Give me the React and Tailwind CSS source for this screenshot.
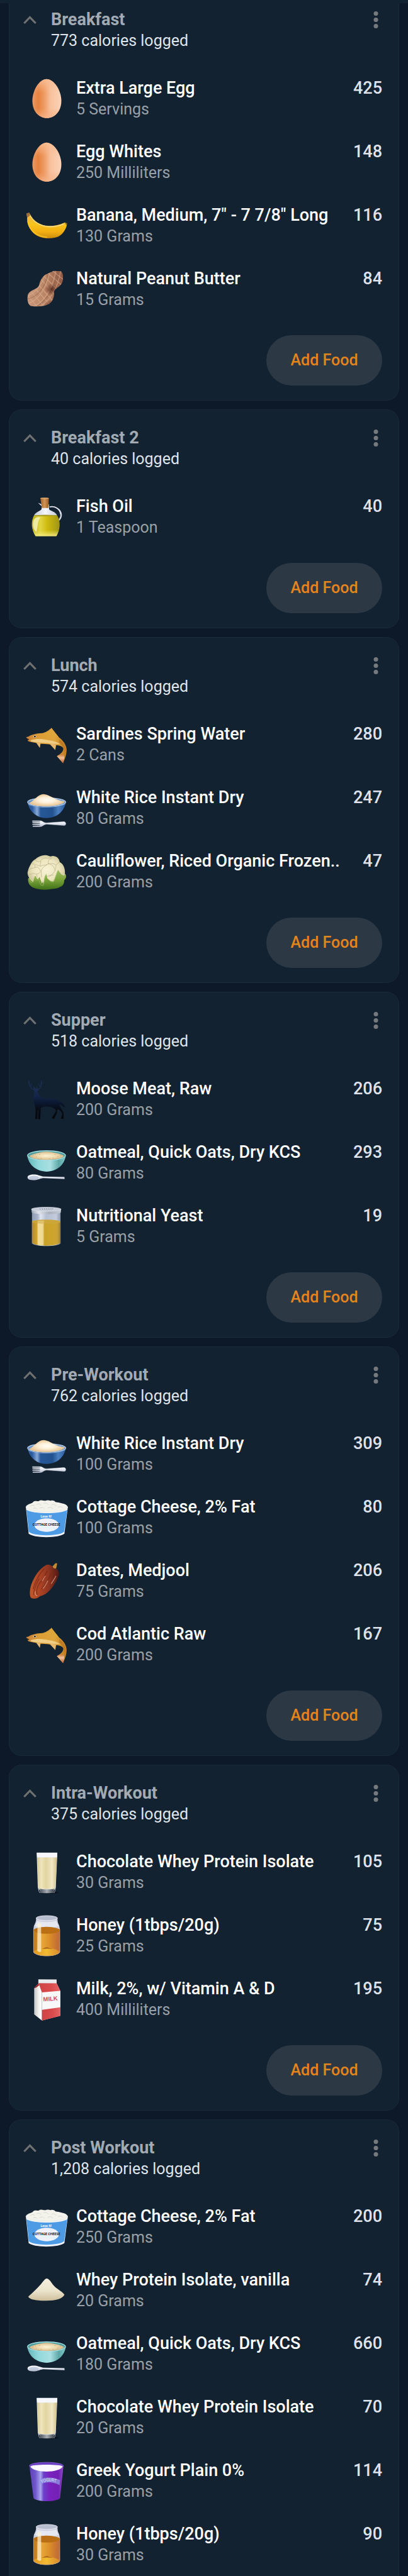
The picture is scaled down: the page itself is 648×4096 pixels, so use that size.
import React from "react";

function Gradient({ id, stops, vertical, radial }) {
  const children = stops.map(([offset, color, opacity = 1]) => (
    <stop key={offset} offset={offset} stopColor={color} stopOpacity={opacity} />
  ));
  if (radial) return <radialGradient id={id}>{children}</radialGradient>;
  return (
    <linearGradient id={id} x1="0" y1="0" x2={vertical ? 0 : 1} y2={vertical ? 1 : 0}>
      {children}
    </linearGradient>
  );
}

function SharedGradients() {
  return (
    <svg className="block h-0 w-0" aria-hidden="true">
      <defs>
        <Gradient id="egg" stops={[[0, "#e99a66"], [0.2, "#e6823f"], [0.4, "#ee9a62"], [0.62, "#f8c19c"], [1, "#fbd3b8"]]} />
        <Gradient id="eggTop" vertical stops={[[0, "#f9be95", 0.9], [0.35, "#f9be95", 0], [0.75, "#f3a878", 0], [1, "#f6b68c", 0.8]]} />
        <Gradient id="banana" vertical stops={[[0, "#e8b64e"], [0.45, "#f7c31c"], [0.75, "#f2ae12"], [1, "#c98a10"]]} />
        <Gradient id="peanut" stops={[[0, "#c9977a"], [0.55, "#b98264"], [1, "#8d5842"]]} />
        <Gradient id="shade" radial stops={[[0, "#43180e", 0.7], [1, "#43180e", 0]]} />
        <Gradient id="cork" stops={[[0, "#9c5f2c"], [0.5, "#d09455"], [1, "#9a5c2a"]]} />
        <Gradient id="oil" stops={[[0, "#b9ac1d"], [0.3, "#e2d543"], [0.55, "#cfbb0f"], [1, "#9d9418"]]} />
        <Gradient id="oilGlow" vertical stops={[[0, "#f5efa0", 0], [0.7, "#f0e660", 0], [1, "#f5ee8a", 0.9]]} />
        <Gradient id="glassNeck" stops={[[0, "#c5cbd9"], [0.5, "#f4f6fb"], [1, "#c3c9d6"]]} />
        <Gradient id="fish" stops={[[0, "#c9823a"], [0.35, "#dc9e35"], [0.7, "#dda63c"], [1, "#c07a22"]]} />
        <Gradient id="tail" vertical stops={[[0, "#c9752f"], [0.4, "#f0c19a"], [1, "#b9572b"]]} />
        <Gradient id="blueBowl" stops={[[0, "#2f62a4"], [0.12, "#2a5a9e"], [0.25, "#87a9d8"], [0.34, "#265798"], [0.65, "#23528f"], [0.8, "#4b7fc0"], [1, "#2a5a9e"]]} />
        <Gradient id="rice" radial stops={[[0, "#fffdf6"], [0.45, "#fdf0d8"], [1, "#e8c592"]]} />
        <Gradient id="silver" vertical stops={[[0, "#ffffff"], [0.5, "#e4e7f1"], [1, "#a9b1c2"]]} />
        <Gradient id="leaf" vertical stops={[[0, "#a4bd6c"], [0.5, "#7ba63a"], [1, "#3f7018"]]} />
        <Gradient id="curd" radial stops={[[0, "#f8f2d5"], [0.7, "#ede5be"], [1, "#d2caa0"]]} />
        <Gradient id="deer" vertical stops={[[0, "#1d3059"], [0.28, "#15254a"], [0.5, "#0c1830"], [0.7, "#070d16"], [1, "#05080c"]]} />
        <Gradient id="tealBowl" stops={[[0, "#62b5b8"], [0.3, "#92d8dc"], [0.6, "#a9dfe2"], [0.82, "#5ea8a8"], [1, "#7fc6c8"]]} />
        <Gradient id="oats" radial stops={[[0, "#fbf2d6"], [0.5, "#eedbb0"], [1, "#d9b98a"]]} />
        <Gradient id="yeast" stops={[[0, "#b08c2c"], [0.18, "#d3a52f"], [0.22, "#ecd27f"], [0.37, "#e6cb78"], [0.42, "#c9a227"], [0.8, "#cda52e"], [0.9, "#c7a03a"], [1, "#9b7d2c"]]} />
        <Gradient id="jarGlass" stops={[[0, "#8f9cb3"], [0.2, "#a9b4c9"], [0.3, "#dfe5f1"], [0.5, "#b5bfd3"], [0.85, "#c3cbdc"], [1, "#8e99b0"]]} />
        <Gradient id="lid" stops={[[0, "#9ea7b5"], [0.25, "#dfe3ea"], [0.6, "#a9b0bc"], [1, "#c6ccd6"]]} />
        <Gradient id="date" stops={[[0, "#c05a2c"], [0.35, "#ab4324"], [0.65, "#8d3420"], [1, "#541a14"]]} />
        <Gradient id="shake" stops={[[0, "#d8cb97"], [0.2, "#efe5bd"], [0.45, "#e2d5a1"], [0.75, "#f0e7c4"], [1, "#cfc08b"]]} />
        <Gradient id="glassBase" stops={[[0, "#cfd3d6"], [0.15, "#59626b"], [0.5, "#a8adb3"], [0.85, "#4c555e"], [1, "#c7cbd0"]]} />
        <Gradient id="honey" stops={[[0, "#b9771f"], [0.14, "#d08a22"], [0.3, "#e9a63b"], [0.6, "#dc8f28"], [0.85, "#c97433"], [1, "#bb6a3c"]]} />
        <Gradient id="honeyBase" stops={[[0, "#e0971f"], [0.5, "#f2bb34"], [1, "#d9892b"]]} />
        <Gradient id="carton" stops={[[0, "#c4c5c4"], [0.6, "#f4f4f2"], [1, "#ffffff"]]} />
        <Gradient id="cartonRed" stops={[[0, "#cf4446"], [0.55, "#d94a4c"], [1, "#e56364"]]} />
        <Gradient id="pile" vertical stops={[[0, "#f6efdf"], [0.55, "#ece4cd"], [1, "#cdbf9b"]]} />
        <Gradient id="yogurt" stops={[[0, "#5b3fb5"], [0.18, "#7056cc"], [0.33, "#a9a4ef"], [0.42, "#6b40c9"], [0.6, "#7a22c0"], [0.85, "#7420b4"], [1, "#8d4fc7"]]} />
      </defs>
    </svg>
  );
}

function Egg() {
  const d = "M186 93C238 93 293 172 293 250C293 330 242 375 188 375C132 375 84 328 84 250C84 172 136 93 186 93Z";
  return (
    <>
      <path d={d} fill="url(#egg)" />
      <path d={d} fill="url(#eggTop)" />
    </>
  );
}

function Banana() {
  return (
    <g transform="scale(1 1.186)">
      <path d="M42 900L62 895L68 908C90 948 140 972 205 975C250 976 290 966 318 954L334 960C332 985 312 1018 280 1036C245 1054 170 1058 120 1036C75 1012 44 975 46 925Z" fill="url(#banana)" />
      <path d="M64 905C88 948 140 978 205 980C250 980 285 972 312 962" fill="none" stroke="#f5d77d" strokeWidth="7" />
      <path d="M50 945C62 1005 120 1042 190 1044" fill="none" stroke="#ffcf24" strokeWidth="9" opacity=".6" />
      <path d="M42 900L62 895L68 910L47 925Z" fill="#a0703a" />
      <path d="M318 954L334 960L332 972L324 964Z" fill="#8a6a20" />
    </g>
  );
}

function Peanut() {
  const d = "M238 1250L290 1252C306 1262 310 1292 300 1318C288 1350 248 1352 240 1375C244 1400 236 1430 208 1448C180 1466 110 1470 72 1464C46 1452 44 1410 54 1390C72 1364 118 1364 132 1338C140 1306 158 1284 180 1272Z";
  return (
    <g transform="scale(1 1.186)">
      <clipPath id="peanutShell"><path d={d} /></clipPath>
      <path d={d} fill="url(#peanut)" />
      <g clipPath="url(#peanutShell)">
        <path d="M50 1400L130 1480M75 1375L175 1475M105 1358L215 1460M128 1335L240 1440M145 1300L250 1400M165 1280L270 1370M195 1262L300 1340M230 1250L310 1305M40 1450C110 1440 180 1380 215 1240M50 1400C100 1390 160 1330 180 1260M70 1475C160 1450 230 1370 255 1240M110 1480C200 1450 270 1360 290 1240M165 1480C220 1450 300 1370 320 1260" fill="none" stroke="#d9ae90" strokeWidth="5" opacity=".7" />
        <path d="M52 1420C120 1410 180 1350 200 1255M90 1478C170 1450 240 1370 270 1250" fill="none" stroke="#865640" strokeWidth="5" opacity=".45" />
        <ellipse cx="222" cy="1362" rx="50" ry="36" fill="url(#shade)" />
        <ellipse cx="222" cy="1455" rx="56" ry="28" fill="url(#shade)" />
      </g>
    </g>
  );
}

function OilBottle() {
  return (
    <g transform="scale(1.877 1.339)">
      <path d="M191 583C212 576 232 594 235 622C236 640 230 650 223 658" fill="none" stroke="#cfd4e0" strokeWidth="6" />
      <path d="M193 581C214 576 230 594 232 622" fill="none" stroke="#fafbff" strokeWidth="2" />
      <path d="M146 560L160 568L188 568L189 596C196 606 212 606 220 628L131 628C136 610 155 606 160 594L160 578Z" fill="url(#glassNeck)" />
      <path d="M131 628L220 628C234 660 232 705 217 740L137 740C120 705 118 660 131 628Z" fill="url(#oil)" />
      <path d="M131 628L220 628C234 660 232 705 217 740L137 740C120 705 118 660 131 628Z" fill="url(#oilGlow)" />
      <path d="M130 650C140 636 150 636 155 640C143 660 146 690 140 718C124 700 125 670 130 650Z" fill="#f6f2c0" opacity=".8" />
      <ellipse cx="175" cy="629" rx="44" ry="4" fill="#a89b25" />
      <path d="M155 534L188 534L186 588L161 588Z" fill="url(#cork)" />
      <ellipse cx="171.500" cy="536" rx="16.500" ry="4" fill="#d8a56d" />
    </g>
  );
}

function Fish() {
  return (
    <>
      <path d="M24 126L40 122C60 108 100 98 140 97C165 92 190 76 207 58C222 78 246 108 262 128C290 150 312 176 316 212C318 250 302 284 290 314C276 296 260 278 246 262C270 250 292 232 292 208C288 192 262 184 240 184L234 218C222 204 208 190 196 178C170 176 148 174 128 174L122 202C114 190 106 178 98 168C78 164 56 162 40 156L34 148L46 142L30 134Z" fill="url(#fish)" />
      <path d="M60 146C100 134 140 138 180 146C220 150 252 162 272 178C246 172 208 178 180 168C140 166 90 166 54 154Z" fill="#f0cd86" />
      <path d="M98 166L122 202L126 168ZM194 172L234 218L238 178Z" fill="#e7b672" />
      <path d="M140 97C160 108 200 100 207 60C222 82 246 108 260 128C230 116 180 110 140 97Z" fill="#dca63a" />
      <path d="M262 140C300 165 312 215 296 240C304 205 284 180 262 164Z" fill="#b26d1f" opacity=".6" />
      <path d="M246 262L276 248C300 246 306 270 290 314Z" fill="url(#tail)" />
      <path d="M30 134L46 141L34 148Z" fill="#4b2513" />
      <circle cx="87" cy="121" r="9" fill="#f4ead8" />
      <circle cx="87" cy="121" r="6" fill="#1c1a18" />
    </>
  );
}

function RiceBowl() {
  return (
    <>
      <path d="M34 596C44 650 86 710 172 711C258 710 302 650 311 594C290 640 60 642 34 596Z" fill="url(#blueBowl)" />
      <ellipse cx="172" cy="596" rx="138" ry="31" fill="#6f97ca" stroke="#bcd0ea" strokeWidth="5" />
      <path d="M46 602C80 590 104 540 150 538C200 542 220 580 300 590C306 606 240 626 172 625C110 625 60 618 46 602Z" fill="url(#rice)" />
      <path d="M40 612C90 640 250 640 306 608" fill="none" stroke="#8fb0da" strokeWidth="4" />
      <path d="M69 730L122 730C140 728 148 746 172 746L296 737C314 738 314 763 300 765L172 755C150 756 145 774 122 773L72 773L72 768L124 766L124 760L70 758L70 753L124 752L124 746L70 744L70 739L124 738L124 734L69 734Z" fill="url(#silver)" stroke="#dfe3ee" strokeWidth="2" />
    </>
  );
}

function Cauliflower() {
  return (
    <>
      <path d="M38 1150C36 1185 50 1206 82 1218C120 1232 160 1232 190 1228C222 1222 250 1224 268 1210C290 1204 300 1184 298 1162C312 1148 318 1128 306 1116L250 1080L70 1120Z" fill="url(#leaf)" />
      <path d="M40 1082C54 1050 66 1022 90 1010C110 990 136 980 160 980C184 978 196 996 212 986C240 984 262 1000 266 1030C292 1042 306 1076 304 1110C306 1136 288 1130 272 1112L254 1088C240 1110 234 1146 220 1170C204 1172 190 1160 176 1148L170 1118C156 1126 150 1170 152 1190L144 1172L138 1188C130 1168 126 1150 120 1138C112 1150 106 1158 100 1150L92 1130C84 1136 80 1150 74 1176C56 1160 34 1136 34 1106Z" fill="url(#curd)" />
      <path d="M90 1012C100 1030 116 1030 130 1022C140 1002 160 996 180 1004C200 994 214 1002 210 988M58 1042C76 1034 92 1050 88 1070C70 1076 52 1072 44 1088M88 1070C104 1060 124 1076 128 1098C116 1118 96 1122 80 1112C66 1110 56 1124 40 1116M128 1060C140 1050 176 1054 184 1042C206 1046 228 1060 232 1092C222 1116 198 1130 186 1128M132 1098C136 1074 150 1064 184 1042M184 1042C180 1020 190 1006 210 1004M240 1052C250 1036 262 1036 266 1030M232 1092C238 1074 240 1064 240 1052C226 1040 206 1040 184 1042M130 1022C128 1040 122 1052 128 1060C112 1056 96 1050 88 1046M176 1130C190 1140 210 1120 222 1124M100 1120L104 1140M132 1098L134 1140" fill="none" stroke="#b7ad82" strokeWidth="3" />
      <path d="M50 1150C46 1190 80 1190 84 1134C96 1170 104 1166 112 1150L130 1196L146 1200L168 1116C174 1150 200 1180 222 1172C238 1150 240 1110 256 1088L280 1120" fill="none" stroke="#b6cc85" strokeWidth="4" opacity=".6" />
    </>
  );
}

function Deer() {
  return (
    <>
      <path d="M44 28C42 62 54 86 84 92M48 50L40 40M56 68L62 50M134 26C138 62 130 84 106 92M130 50L140 42M124 68L114 50" fill="none" stroke="#1c3059" strokeWidth="5" strokeLinecap="round" />
      <path d="M78 88L70 84L80 98L84 124C74 140 72 160 82 186L88 214L92 240L90 302L104 306L108 240L112 240L110 304L126 306L130 224C150 212 180 212 208 218C232 226 240 236 238 248L208 298L226 302L246 262L250 232C266 238 280 250 284 268L276 302L294 304L294 258C284 232 266 222 266 196C276 202 290 216 306 222C302 196 270 168 232 160C190 152 150 160 124 140L106 112L108 100L120 88L106 88L102 66L98 84L90 84L78 66Z" fill="url(#deer)" />
    </>
  );
}

function OatmealBowl() {
  return (
    <>
      <path d="M32 572C44 640 100 684 172 685C244 684 298 640 310 572C280 612 64 612 32 572Z" fill="url(#tealBowl)" />
      <ellipse cx="171" cy="568" rx="137" ry="34" fill="#4f9ea0" stroke="#a5dfe2" strokeWidth="6" />
      <path d="M46 572C80 556 120 544 172 541C220 544 270 554 298 572C280 592 230 600 172 600C110 600 64 592 46 572Z" fill="url(#oats)" />
      <path d="M70 570h6M95 580h6M118 560h6M90 562h4M130 588h6M230 560h6M250 578h6M215 586h6M270 568h6M190 592h6M110 590h4M240 590h5" stroke="#c79e6b" strokeWidth="4" />
      <path d="M34 728C32 710 60 704 88 706C112 708 120 716 146 720L300 724L302 739L146 732C120 736 104 748 76 747C52 746 36 742 34 728Z" fill="url(#silver)" />
      <ellipse cx="80" cy="728" rx="36" ry="13" fill="#b9c4d8" opacity=".8" />
    </>
  );
}

function YeastJar() {
  return (
    <>
      <path d="M66 980L66 1204C90 1230 250 1230 272 1204L272 980Z" fill="url(#jarGlass)" />
      <path d="M66 1050L66 1200C90 1228 250 1228 272 1200L272 1050Z" fill="url(#yeast)" />
      <ellipse cx="169" cy="1048" rx="103" ry="15" fill="#cda63a" />
      <path d="M106 1040H152V1216C136 1215 118 1213 106 1210Z" fill="#fff4c8" opacity=".35" />
      <path d="M62 958L64 982C90 998 250 998 274 982L276 958Z" fill="url(#lid)" />
      <ellipse cx="169" cy="958" rx="107" ry="15" fill="#c6ccd8" stroke="#e1e6ee" strokeWidth="3" />
      <path d="M122 952l6 8M138 950l6 12M154 950l6 12M170 950l5 12M186 950l4 12M202 950l2 12M216 950l-1 8" stroke="#7d8796" strokeWidth="4" />
    </>
  );
}

function CottageCheese() {
  return (
    <>
      <path d="M22 106L42 296C70 332 270 332 300 296L325 106Z" fill="#f0f3fb" />
      <path d="M26 126L43 284C74 318 268 318 298 284L321 126C280 158 70 158 26 126Z" fill="#4d9be4" />
      <ellipse cx="173" cy="106" rx="152" ry="40" fill="#eef0ea" />
      <path d="M30 104C36 86 60 82 72 72C82 56 100 66 116 62C134 50 150 62 164 60C180 50 196 64 208 58C230 56 236 72 244 78C262 70 276 84 292 84C308 82 318 96 318 106C300 140 50 144 30 104Z" fill="#f3f3ec" />
      <path d="M52 100C66 88 80 92 86 100M100 88C112 76 128 84 130 94M150 80C160 72 180 78 184 90M206 92C216 80 236 88 240 100M120 116C134 104 152 110 156 120M180 112C194 102 214 110 216 120M254 108C264 98 284 104 286 112M76 116C84 110 98 112 102 122" fill="none" stroke="#d3d5c9" strokeWidth="4" />
      <ellipse cx="172" cy="236" rx="88" ry="49" fill="#eef1fb" />
      <text x="168" y="182" textAnchor="middle" fontSize="24" fontWeight="700" fill="#ffffff" fontFamily="Roboto, sans-serif">Lose It!</text>
      <text x="170" y="239" textAnchor="middle" fontSize="24" fontWeight="700" fill="#101418" fontFamily="Roboto, sans-serif">COTTAGE CHEESE</text>
    </>
  );
}

function DateFruit() {
  return (
    <>
      <path d="M210 540L236 512L248 514L240 552L222 556Z" fill="#c18a35" />
      <path d="M168 526C196 518 214 532 222 548C248 550 262 566 260 590C252 630 226 672 196 706C176 730 150 744 122 752C104 772 72 772 58 762C46 740 50 700 62 664C82 610 120 552 168 526Z" fill="url(#date)" />
      <path d="M154 552C120 590 90 640 74 700M178 566C150 610 160 620 118 660C100 690 96 716 104 740M200 590C190 630 160 670 134 700M118 622C100 660 80 690 78 740" fill="none" stroke="#6f2315" strokeWidth="6" opacity=".65" />
      <path d="M238 606C228 630 214 644 206 660M162 606C150 616 150 630 140 640M180 640C170 660 160 680 146 694M90 716C86 730 92 742 102 748" fill="none" stroke="#e7b09c" strokeWidth="5" opacity=".75" strokeLinecap="round" />
    </>
  );
}

function ShakeGlass() {
  return (
    <>
      <ellipse cx="200" cy="338" rx="56" ry="8" fill="#060b12" opacity=".6" />
      <path d="M100 50L249 50L238 300L230 338L118 338L108 300Z" fill="#dfe2ea" />
      <path d="M104 84L246 84L236 296L228 312L118 312L110 296Z" fill="url(#shake)" />
      <path d="M101 52L248 52L247 84L103 84Z" fill="#f6f7fc" />
      <path d="M112 308C150 318 200 318 236 308L230 338C200 344 150 344 118 338Z" fill="url(#glassBase)" />
      <path d="M118 318L124 336M230 318L224 336" stroke="#1d2630" strokeWidth="6" />
    </>
  );
}

function HoneyJar() {
  return (
    <>
      <path d="M96 522C96 548 90 560 80 580L76 606L76 770C96 808 248 808 268 770L267 600L262 576C252 560 250 546 250 522Z" fill="#cdd0de" />
      <ellipse cx="173" cy="524" rx="77" ry="18" fill="#b9bdd0" stroke="#edeef6" strokeWidth="4" />
      <path d="M104 544C140 556 206 556 242 544L256 580C250 596 92 596 88 580Z" fill="#eceef5" opacity=".8" />
      <path d="M78 604L78 768C98 806 248 806 266 768L267 604Z" fill="url(#honey)" />
      <path d="M78 764C120 740 150 744 172 736C196 744 230 742 266 766C250 808 96 808 78 764Z" fill="url(#honeyBase)" />
      <path d="M134 748C160 738 170 728 190 740C206 744 212 746 214 748C190 744 160 744 134 748Z" fill="#a9641a" />
      <ellipse cx="172" cy="612" rx="94" ry="25" fill="#bb6f14" />
      <path d="M106 566C114 560 124 562 132 566L132 766C122 772 112 768 104 758Z" fill="#fff2d2" opacity=".72" />
      <path d="M78 604L78 768C98 806 248 806 266 768L267 604" fill="none" stroke="#caa173" strokeWidth="3" />
    </>
  );
}

function MilkCarton() {
  return (
    <>
      <path d="M82 1032L114 994L138 1062L138 1265L82 1220Z" fill="url(#carton)" />
      <path d="M82 1032L112 996L118 1010L96 1028Z" fill="#a8232a" />
      <path d="M112 967L244 968L244 998L112 996Z" fill="#e9eaec" />
      <path d="M114 996L244 996L271 1052L271 1230L138 1265L138 1062Z" fill="#f8f8f8" />
      <path d="M114 996L244 996L271 1050L138 1062Z" fill="url(#cartonRed)" />
      <path d="M138 1188L271 1170L271 1232L138 1265Z" fill="url(#cartonRed)" />
      <text x="148" y="1126" fontSize="43" fontWeight="700" fill="#d8484a" fontFamily="'Liberation Sans', sans-serif" transform="rotate(-4 148 1126)">MILK</text>
    </>
  );
}

function PowderPile() {
  return (
    <g transform="scale(1.877 2.15)">
      <path d="M109 622C122 612 140 598 158 580C170 566 176 560 182 562C192 564 198 578 212 590C226 600 240 606 248 616C240 630 214 636 178 636C144 636 112 632 109 622Z" fill="url(#pile)" />
      <path d="M150 600h1M160 590h1M172 580h1M180 594h1M192 600h1M168 606h1M140 612h1M154 620h1M180 618h1M200 612h1M214 606h1M222 618h1M190 626h1M166 628h1M130 620h1" stroke="#cfc3a0" strokeWidth="1" />
    </g>
  );
}

function YogurtTub() {
  return (
    <g transform="scale(1.877 2.15)">
      <path d="M113 1192L129 1300C140 1314 220 1314 231 1300L244 1192Z" fill="url(#yogurt)" />
      <ellipse cx="178.500" cy="1192" rx="65.500" ry="12" fill="#6a3fc4" stroke="#9069d8" strokeWidth="1.500" />
      <path d="M117 1194C122 1186 236 1186 241 1194C232 1217 126 1217 117 1194Z" fill="#fbf9ff" />
      <path d="M153 1238C176 1228 206 1230 231 1240L229 1257C206 1246 178 1244 157 1254Z" fill="#8f93e4" opacity=".8" />
      <path id="yogurtArc" d="M157 1252C178 1240 208 1242 230 1254" fill="none" />
      <text fontSize="15" fill="#dfe3ff" fontFamily="Roboto, sans-serif"><textPath href="#yogurtArc" startOffset="3">YOGURT</textPath></text>
    </g>
  );
}

const ICONS = {
  egg: [Egg, "32 81 309 309"],
  banana: [Banana, "32 1001 309 309"],
  peanut: [Peanut, "32 1461 309 309"],
  oil: [OilBottle, "182 698 309 309"],
  fish: [Fish, "17 25 309 309"],
  rice: [RiceBowl, "17 485 309 309"],
  cauliflower: [Cauliflower, "17 945 309 309"],
  deer: [Deer, "17 7 309 309"],
  oatmeal: [OatmealBowl, "17 467 309 309"],
  yeast: [YeastJar, "17 927 309 309"],
  cottage: [CottageCheese, "17 27 309 309"],
  date: [DateFruit, "17 487 309 309"],
  shake: [ShakeGlass, "17 37 309 309"],
  honey: [HoneyJar, "17 497 309 309"],
  milk: [MilkCarton, "17 957 309 309"],
  powder: [PowderPile, "182 1139 309 309"],
  yogurt: [YogurtTub, "182 2518 309 309"],
};

const MEALS = [
  { name: "Breakfast", total: "773", foods: [
    ["egg", "Extra Large Egg", "5 Servings", 425],
    ["egg", "Egg Whites", "250 Milliliters", 148],
    ["banana", 'Banana, Medium, 7" - 7 7/8" Long', "130 Grams", 116],
    ["peanut", "Natural Peanut Butter", "15 Grams", 84],
  ] },
  { name: "Breakfast 2", total: "40", foods: [["oil", "Fish Oil", "1 Teaspoon", 40]] },
  { name: "Lunch", total: "574", foods: [
    ["fish", "Sardines Spring Water", "2 Cans", 280],
    ["rice", "White Rice Instant Dry", "80 Grams", 247],
    ["cauliflower", "Cauliflower, Riced Organic Frozen..", "200 Grams", 47],
  ] },
  { name: "Supper", total: "518", foods: [
    ["deer", "Moose Meat, Raw", "200 Grams", 206],
    ["oatmeal", "Oatmeal, Quick Oats, Dry KCS", "80 Grams", 293],
    ["yeast", "Nutritional Yeast", "5 Grams", 19],
  ] },
  { name: "Pre-Workout", total: "762", foods: [
    ["rice", "White Rice Instant Dry", "100 Grams", 309],
    ["cottage", "Cottage Cheese, 2% Fat", "100 Grams", 80],
    ["date", "Dates, Medjool", "75 Grams", 206],
    ["fish", "Cod Atlantic Raw", "200 Grams", 167],
  ] },
  { name: "Intra-Workout", total: "375", foods: [
    ["shake", "Chocolate Whey Protein Isolate", "30 Grams", 105],
    ["honey", "Honey (1tbps/20g)", "25 Grams", 75],
    ["milk", "Milk, 2%, w/ Vitamin A & D", "400 Milliliters", 195],
  ] },
  { name: "Post Workout", total: "1,208", foods: [
    ["cottage", "Cottage Cheese, 2% Fat", "250 Grams", 200],
    ["powder", "Whey Protein Isolate, vanilla", "20 Grams", 74],
    ["oatmeal", "Oatmeal, Quick Oats, Dry KCS", "180 Grams", 660],
    ["shake", "Chocolate Whey Protein Isolate", "20 Grams", 70],
    ["yogurt", "Greek Yogurt Plain 0%", "200 Grams", 114],
    ["honey", "Honey (1tbps/20g)", "30 Grams", 90],
  ] },
];

function FoodRow({ icon, name, amount, calories }) {
  const [Drawing, viewBox] = ICONS[icon];
  return (
    <li className="flex items-start pt-4 pr-[26px] pb-[17px] pl-[25px]">
      <svg viewBox={viewBox} className="size-[68px] shrink-0 overflow-visible" aria-hidden="true">
        <Drawing />
      </svg>
      <div className="ml-[13px] min-w-0 flex-1">
        <p className="text-[27px] leading-[34px] font-medium whitespace-nowrap text-white">{name}</p>
        <p className="text-[25px] leading-[34px] text-[#99a0a7]">{amount}</p>
      </div>
      <span className="text-[27px] leading-[34px] font-medium text-[#dfe2ea]">{calories}</span>
    </li>
  );
}

function MealCard({ meal, first, last }) {
  const shape = first
    ? "rounded-b-[20px] border-t-0"
    : last
      ? "rounded-t-[20px] border-b-0"
      : "rounded-[20px]";
  return (
    <section className={`border border-[#1a2a38] bg-[#132231] ${shape}`}>
      <header className={`flex items-start pr-[26px] pb-[25px] pl-5 ${first ? "pt-[9px]" : "pt-[27px]"}`}>
        <button type="button" aria-label={`Collapse ${meal.name}`} className="flex h-[34px] w-6 items-center justify-center">
          <svg viewBox="0 0 24 16" className="h-4 w-6" fill="none" stroke="#707272" strokeWidth="3.2">
            <path d="M3.300 14L12.500 4.500L21.700 14" />
          </svg>
        </button>
        <div className="ml-[22px] flex-1">
          <h2 className="text-[27px] leading-[34px] font-bold text-[#a2abb3]">{meal.name}</h2>
          <p className="text-[25px] leading-[34px] text-[#dfe4ea]">{meal.total} calories logged</p>
        </div>
        <button type="button" aria-label={`${meal.name} options`} className="flex h-[34px] w-5 items-center justify-center">
          <svg viewBox="0 0 8 30" className="h-[30px] w-2" fill="#777a7c">
            <circle cx="4" cy="5.500" r="3.500" />
            <circle cx="4" cy="15.500" r="3.500" />
            <circle cx="4" cy="25.500" r="3.500" />
          </svg>
        </button>
      </header>
      <ul>
        {meal.foods.map(([icon, name, amount, calories]) => (
          <FoodRow key={name} icon={icon} name={name} amount={amount} calories={calories} />
        ))}
      </ul>
      {!last && (
        <div className="flex justify-end pt-[22px] pr-[26px] pb-[23px]">
          <button type="button" className="h-20 w-[184px] rounded-full bg-[#2c3945] text-[25px] font-medium text-[#e6841c]">
            Add Food
          </button>
        </div>
      )}
    </section>
  );
}

export default function App() {
  return (
    <main className="min-h-screen bg-[#0d1928] font-['Roboto',sans-serif]">
      <SharedGradients />
      <div className="h-[5px] bg-[#132231]" />
      <div className="flex flex-col gap-[14px] px-[14px]">
        {MEALS.map((meal, i) => (
          <MealCard key={meal.name} meal={meal} first={i === 0} last={i === MEALS.length - 1} />
        ))}
      </div>
    </main>
  );
}
